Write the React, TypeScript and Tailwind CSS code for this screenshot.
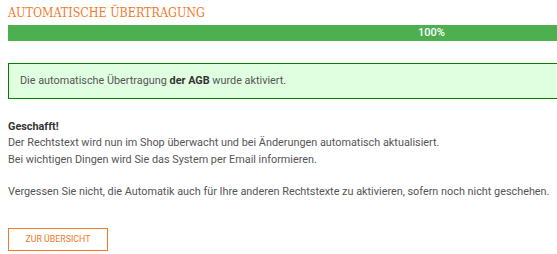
import React from "react";

export default function App() {
  return (
    <div className="w-[557px] h-[254px] overflow-hidden bg-white">
      <div className="w-[847px] ml-[8px] pt-[5px] text-[#555555] font-['Roboto',sans-serif]">
        <h1 className="text-[12.4px] leading-[16px] text-[#f07a2a] font-['DejaVu_Serif_Condensed','DejaVu_Serif',serif]">
          AUTOMATISCHE ÜBERTRAGUNG
        </h1>
        <div className="mt-[4px] h-[16px] bg-[#4caf50] flex items-center justify-center text-white text-[11px] font-medium leading-[16px]">
          100%
        </div>
        <div className="mt-[22px] h-[36px] border border-[#008000] bg-[#e0ffe0] flex items-center pl-[11px] text-[10.85px]">
          <span>
            Die automatische Übertragung <b className="text-[#333333]">der AGB</b> wurde aktiviert.
          </span>
        </div>
        <div className="mt-[20px] text-[10.85px] leading-[16.3px]">
          <div className="font-bold text-[#333333]">Geschafft!</div>
          <div>Der Rechtstext wird nun im Shop überwacht und bei Änderungen automatisch aktualisiert.</div>
          <div>Bei wichtigen Dingen wird Sie das System per Email informieren.</div>
          <div className="h-[16px]" />
          <div>Vergessen Sie nicht, die Automatik auch für Ihre anderen Rechtstexte zu aktivieren, sofern noch nicht geschehen.</div>
        </div>
        <button className="mt-[28px] w-[100px] h-[23px] border border-[#f07a2a] text-[#f07a2a] text-[8.8px] flex items-center justify-center">
          ZUR ÜBERSICHT
        </button>
      </div>
    </div>
  );
}
